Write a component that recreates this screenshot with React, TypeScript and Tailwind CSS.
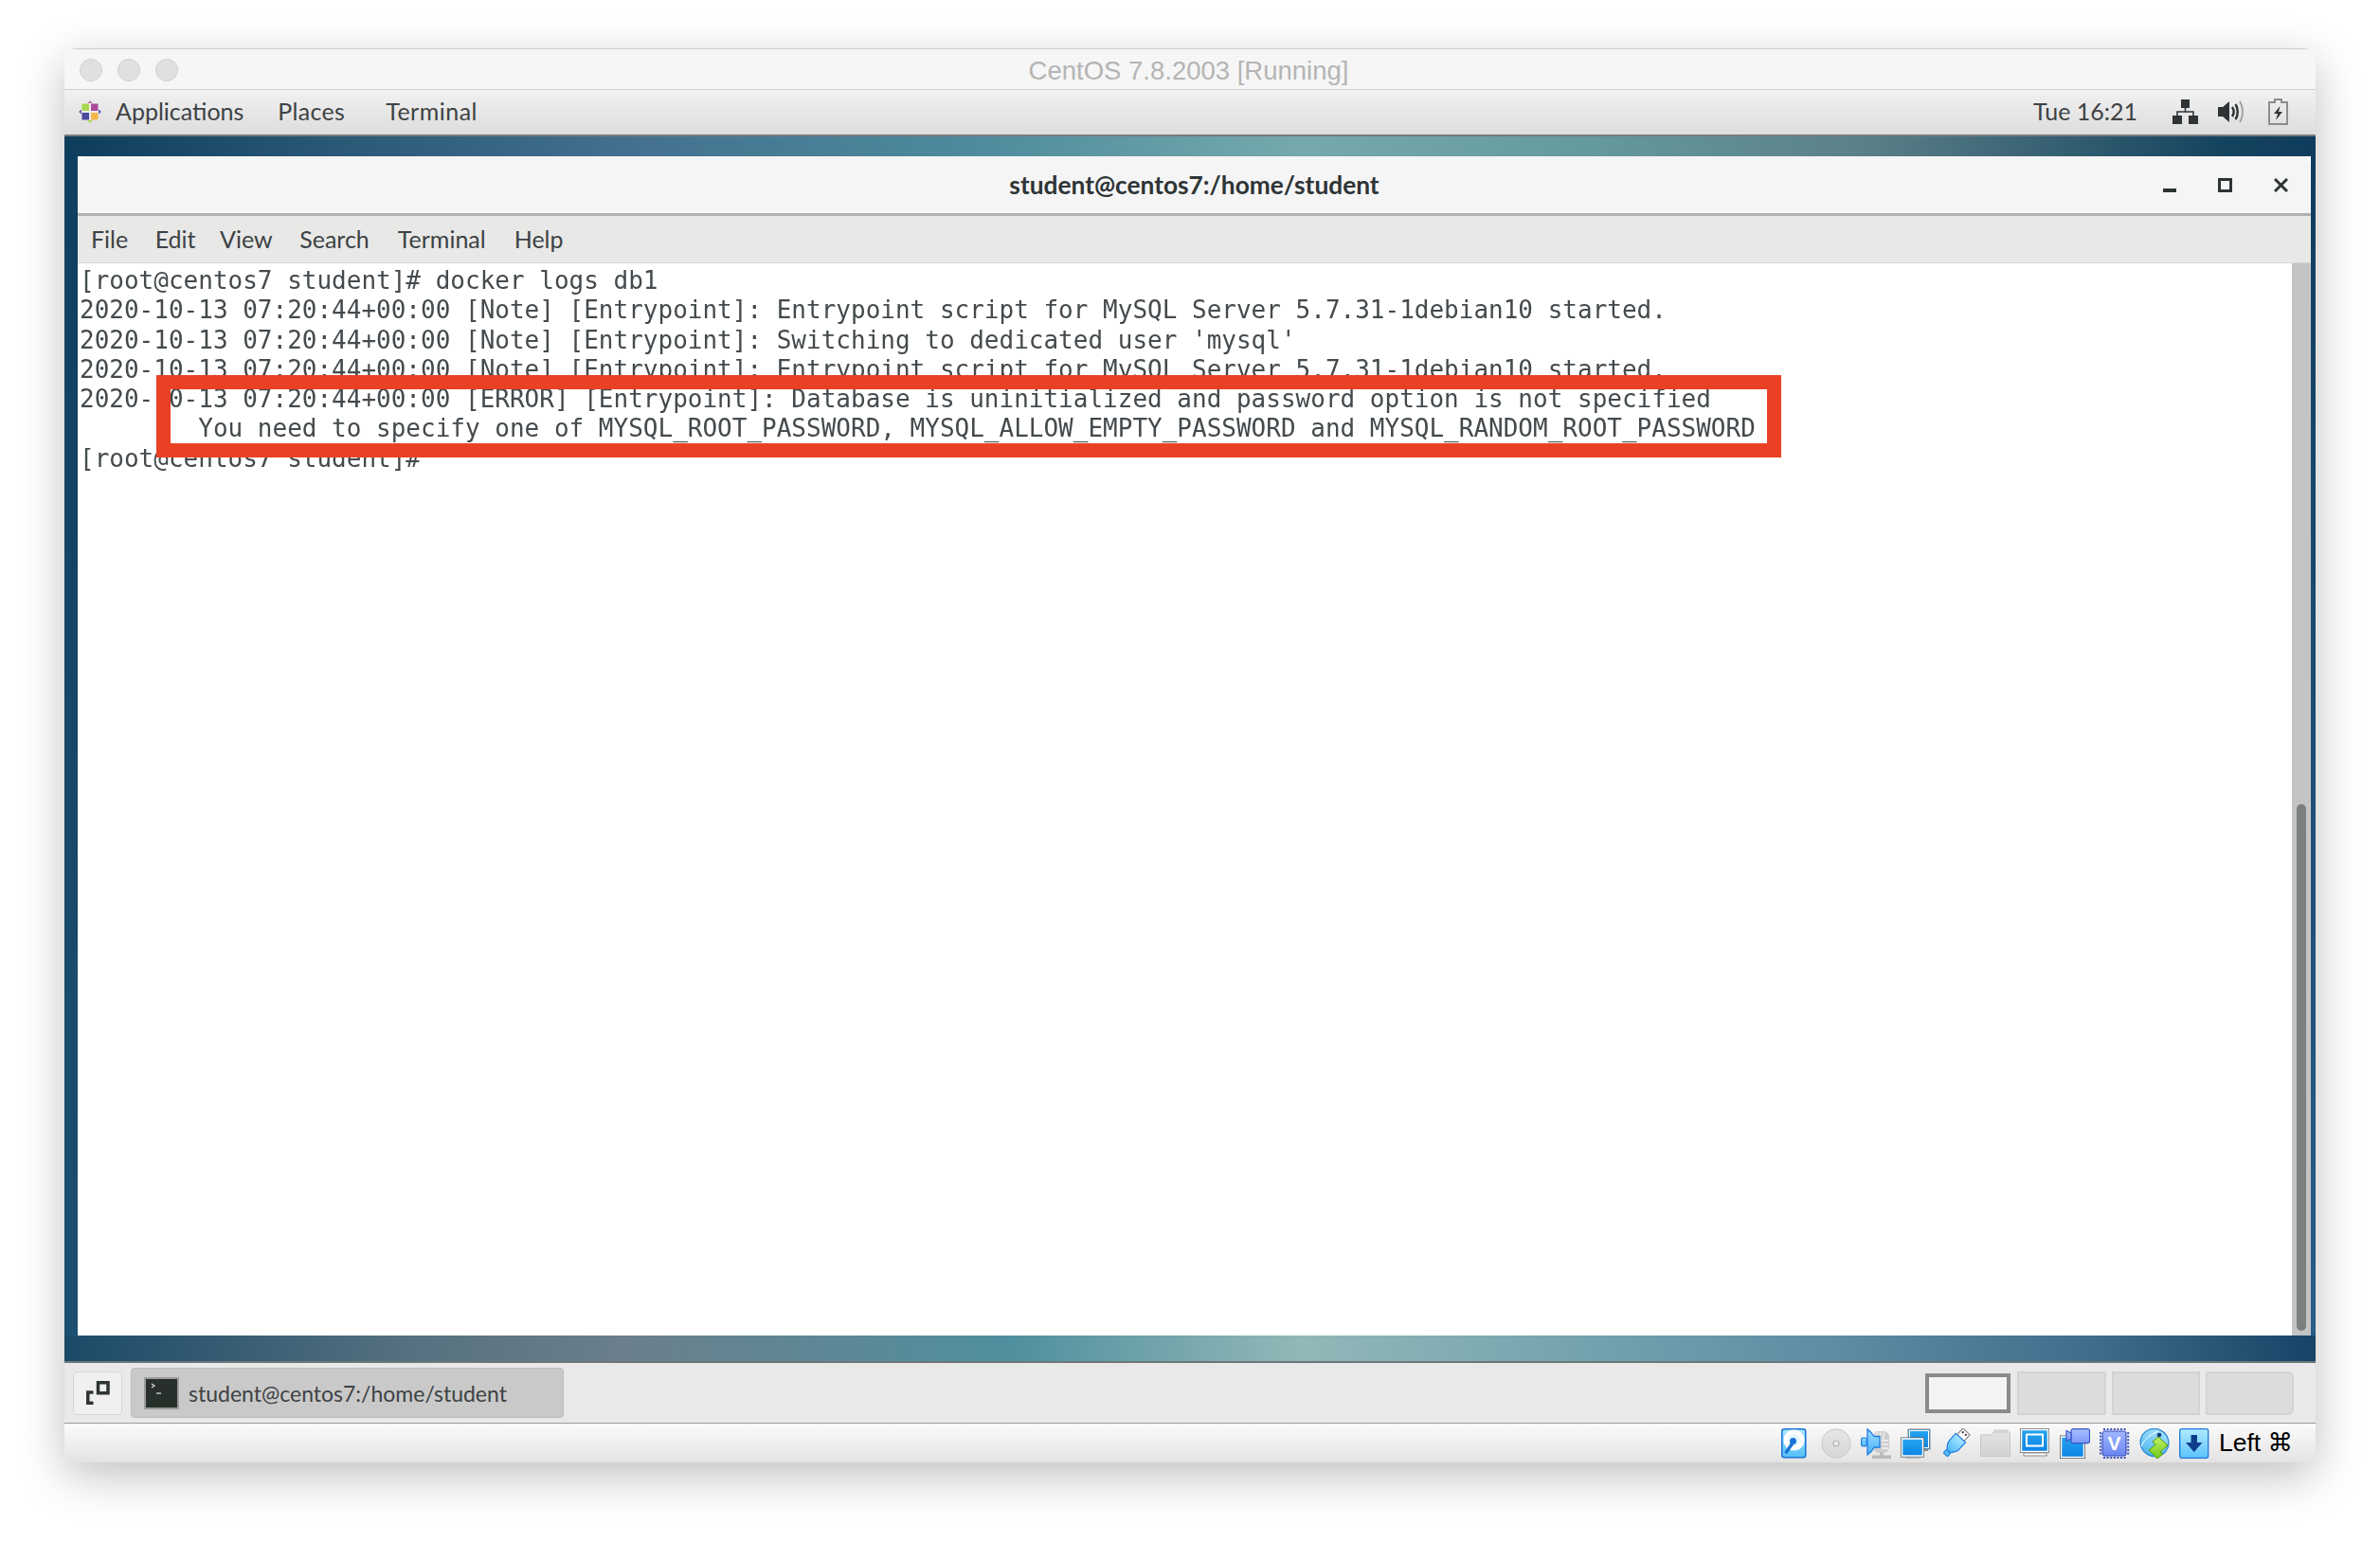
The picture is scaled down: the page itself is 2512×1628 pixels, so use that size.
const lines = [
  "[root@centos7 student]# docker logs db1",
  "2020-10-13 07:20:44+00:00 [Note] [Entrypoint]: Entrypoint script for MySQL Server 5.7.31-1debian10 started.",
  "2020-10-13 07:20:44+00:00 [Note] [Entrypoint]: Switching to dedicated user 'mysql'",
  "2020-10-13 07:20:44+00:00 [Note] [Entrypoint]: Entrypoint script for MySQL Server 5.7.31-1debian10 started.",
  "2020-10-13 07:20:44+00:00 [ERROR] [Entrypoint]: Database is uninitialized and password option is not specified",
  "        You need to specify one of MYSQL_ROOT_PASSWORD, MYSQL_ALLOW_EMPTY_PASSWORD and MYSQL_RANDOM_ROOT_PASSWORD",
  "[root@centos7 student]# ",
];

function CentOSLogo() {
  return (
    <svg width="24" height="24" viewBox="0 0 24 24">
      <rect x="3.500" y="3.500" width="7.500" height="7.500" fill="#a8d64a" />
      <rect x="13" y="3.500" width="7.500" height="7.500" fill="#a8499a" />
      <rect x="3.500" y="13" width="7.500" height="7.500" fill="#4a4aa0" />
      <rect x="13" y="13" width="7.500" height="7.500" fill="#f2b84a" />
      <path d="M12 0l2.5 3h-5z" fill="#c06fb0" />
      <path d="M24 12l-3 2.5v-5z" fill="#5a5ab0" />
      <path d="M12 24l-2.5-3h5z" fill="#a8d64a" />
      <path d="M0 12l3-2.5v5z" fill="#6a5ab0" />
      <path d="M12 3v18M3 12h18" stroke="#f2f2f2" strokeWidth="1.5" />
    </svg>
  );
}

function NetIcon() {
  return (
    <svg width="27" height="26" viewBox="0 0 27 26" fill="#2e3436">
      <rect x="9" y="0" width="9" height="9" />
      <rect x="0" y="17" width="10" height="9" />
      <rect x="17" y="17" width="10" height="9" />
      <path d="M13.5 9v4M5 17v-4h17v4" fill="none" stroke="#2e3436" strokeWidth="1.6" />
    </svg>
  );
}

function SoundIcon() {
  return (
    <svg width="27" height="26" viewBox="0 0 27 26">
      <path d="M0 8h5l7-6v22l-7-6H0z" fill="#2e3436" />
      <path d="M15 8c2 3 2 7 0 10" fill="none" stroke="#2e3436" strokeWidth="2.4" />
      <path d="M18.5 5c3 4.500 3 11.500 0 16" fill="none" stroke="#2e3436" strokeWidth="2.4" />
      <path d="M23 2c4 6.500 4 15.500 0 22" fill="none" stroke="#a0a2a2" strokeWidth="1.8" />
    </svg>
  );
}

function BatteryIcon() {
  return (
    <svg width="21" height="28" viewBox="0 0 21 28">
      <path d="M7 1h7v3h6v23H1V4h6z" fill="none" stroke="#8b8e8e" strokeWidth="2" />
      <path d="M12.500 8L6 16h4l-2 7 7-9h-4z" fill="#2e3436" />
    </svg>
  );
}

function Restore() {
  return (
    <svg width="25" height="25" viewBox="0 0 25 25" fill="none" stroke="#2e3436" strokeWidth="3.500">
      <rect x="12.500" y="1.750" width="10.500" height="11" />
      <path d="M7.500 12H1.750v11.250H7.500" />
    </svg>
  );
}

function TermIcon() {
  return (
    <div className="w-[37px] h-[34px] border-2 border-[#9b9b9b] bg-gradient-to-b from-[#2a2f2c] to-[#253029] shrink-0 flex">
      <svg width="33" height="30" viewBox="0 0 33 30" fill="none" stroke="#d8dcd8" strokeWidth="1.300">
        <path d="M6 5l3 2-3 2" />
        <path d="M11 15h5" />
      </svg>
    </div>
  );
}

const Grad = ({ id, a, b }: { id: string; a: string; b: string }) => (
  <linearGradient id={id} x1="0" y1="0" x2="0" y2="1">
    <stop offset="0" stopColor={a} />
    <stop offset="1" stopColor={b} />
  </linearGradient>
);

function Hd() {
  return (
    <svg width="32" height="32" viewBox="0 0 32 32">
      <defs>
        <Grad id="hd" a="#a5e6ff" b="#55bff8" />
      </defs>
      <rect x="0.750" y="0.750" width="25" height="30" rx="2.500" fill="url(#hd)" stroke="#1b73d6" strokeWidth="1.500" />
      <circle cx="13.500" cy="12.500" r="11" fill="#fff" />
      <circle cx="13.500" cy="12.500" r="6.500" fill="#e4f6ff" />
      <circle cx="12.500" cy="13.500" r="3.500" fill="#1b73d6" />
      <path d="M12 15.500L5.500 25" stroke="#1b73d6" strokeWidth="3.500" strokeLinecap="round" />
    </svg>
  );
}
function Disc() {
  return (
    <svg width="32" height="32" viewBox="0 0 32 32">
      <defs>
        <Grad id="dc" a="#e6e6e6" b="#d6d6d6" />
      </defs>
      <circle cx="16" cy="16" r="15.200" fill="url(#dc)" stroke="#c8c8c8" />
      <circle cx="16" cy="16" r="3" fill="#ececec" stroke="#b4b4b4" strokeWidth="1.200" />
    </svg>
  );
}
function AudioIc() {
  return (
    <svg width="32" height="32" viewBox="0 0 32 32">
      <defs>
        <Grad id="au" a="#9adcff" b="#49b4fb" />
      </defs>
      <rect x="13" y="3" width="17" height="23" rx="6" fill="#cdcdcd" />
      <path d="M17 4v9M20.500 4v9M24 4v9M22 13h7M22 17h7M22 21h7" stroke="#f1f1f1" strokeWidth="1.400" />
      <rect x="20" y="25" width="4" height="4" fill="#bdbdbd" />
      <rect x="12" y="28.500" width="20" height="3.500" fill="#b8b8b8" />
      <path d="M7 .800 C11 4 13 7 14 8.500 H20 V20 H14 C13 22 11 25.500 7 28 Z" fill="url(#au)" stroke="#1e7ce0" strokeWidth="1.300" />
      <rect x=".600" y="10" width="5.500" height="9" rx="1.500" fill="url(#au)" stroke="#1e7ce0" strokeWidth="1.200" />
    </svg>
  );
}
function NetAd() {
  return (
    <svg width="32" height="32" viewBox="0 0 32 32">
      <defs>
        <Grad id="na" a="#27a6ef" b="#0a82e6" />
      </defs>
      <rect x="8" y="1" width="23" height="21" fill="url(#na)" stroke="#8a8a8a" />
      <rect x="9.500" y="2.500" width="20" height="18" fill="none" stroke="#fff" strokeWidth="1" />
      <rect x="24" y="22" width="5" height="2" fill="#8a8a8a" />
      <rect x="0.500" y="10" width="24" height="20" fill="url(#na)" stroke="#555" strokeWidth="1" />
      <rect x="1.500" y="11" width="22" height="18" fill="none" stroke="#fff" strokeWidth="1.500" />
      <rect x="5" y="30" width="16" height="1.500" fill="#9a9a9a" />
    </svg>
  );
}
function Usb() {
  return (
    <svg width="32" height="32" viewBox="0 0 32 32">
      <defs>
        <Grad id="us" a="#a8e6ff" b="#4eb8fa" />
      </defs>
      <g transform="rotate(42 16 16) translate(0 1)">
        <rect x="11" y="-2" width="10" height="9" fill="#fff" stroke="#777" />
        <rect x="12.800" y="0" width="2" height="2" fill="#333" />
        <rect x="17" y="0" width="2" height="2" fill="#333" />
        <path d="M9 7h14v10c0 4-3 7-5 9h-4c-2-2-5-5-5-9z" fill="url(#us)" stroke="#1e7ce0" strokeWidth="1.200" />
        <rect x="13" y="26" width="6" height="5" rx="1" fill="#55baf8" stroke="#1e7ce0" />
      </g>
    </svg>
  );
}
function Folder() {
  return (
    <svg width="32" height="32" viewBox="0 0 32 32">
      <defs>
        <Grad id="fo" a="#e4e4e4" b="#d2d2d2" />
      </defs>
      <path d="M.500 7L12 7l3-5h13l3.500 3v24.500H.500z" fill="url(#fo)" stroke="#c6c6c6" />
      <path d="M15 2h13l3.500 3H14z" fill="#d4d4d4" />
    </svg>
  );
}
function Display() {
  return (
    <svg width="32" height="32" viewBox="0 0 32 32">
      <defs>
        <Grad id="di" a="#27a6ef" b="#0a82e6" />
      </defs>
      <rect x="4" y="26" width="24" height="3" fill="#fff" stroke="#8a8a8a" />
      <rect x=".500" y=".500" width="30" height="25" fill="url(#di)" stroke="#6e6e6e" />
      <rect x="1.500" y="1.500" width="28" height="23" fill="none" stroke="#fff" strokeWidth="1.500" />
      <rect x="7" y="6.500" width="17" height="12" fill="none" stroke="#fff" strokeWidth="2" />
    </svg>
  );
}
function Capture() {
  return (
    <svg width="32" height="32" viewBox="0 0 32 32">
      <defs>
        <Grad id="ca" a="#27a6ef" b="#0a82e6" />
        <Grad id="cb" a="#a8c0ff" b="#7e98f6" />
      </defs>
      <rect x=".500" y="8" width="26" height="23.500" fill="url(#ca)" stroke="#555" />
      <rect x="1.500" y="9" width="24" height="21.500" fill="none" stroke="#fff" strokeWidth="1.500" />
      <rect x="12" y=".700" width="19.500" height="15" rx="2" fill="url(#cb)" stroke="#3b55c8" strokeWidth="1.200" />
      <path d="M12 5l-5-2.500v11L12 11z" fill="url(#cb)" stroke="#3b55c8" strokeWidth="1.200" />
    </svg>
  );
}
function VChip() {
  return (
    <svg width="32" height="32" viewBox="0 0 32 32">
      <defs>
        <Grad id="vc" a="#a0b6ff" b="#6a86f0" />
      </defs>
      <path d="M4 1h24M4 31h24M.800 4v24M30.200 4v24" stroke="#3a4fbe" strokeWidth="2" strokeDasharray="2 1.600" fill="none" />
      <rect x="3" y="3" width="25" height="26" rx="3" fill="url(#vc)" stroke="#3a4fbe" strokeWidth="1.200" />
      <text x="15.500" y="23" textAnchor="middle" fontFamily="Liberation Sans, sans-serif" fontWeight="700" fontSize="21" fill="#fff">V</text>
    </svg>
  );
}
function GlobeIc() {
  return (
    <svg width="32" height="32" viewBox="0 0 32 32">
      <defs>
        <Grad id="gl" a="#a0e0fc" b="#53b8ef" />
        <Grad id="gg" a="#c4f060" b="#6ec81e" />
      </defs>
      <ellipse cx="16" cy="15" rx="15" ry="14.500" transform="rotate(25 16 15)" fill="url(#gl)" stroke="#2a86d0" strokeWidth="1.200" />
      <path d="M2 19C6 10 13 6 20 3" stroke="#fff" strokeWidth="1" fill="none" />
      <circle cx="21" cy="7" r="2.300" fill="#123a70" />
      <path d="M20 9l10 9-8 7 3 2-6 5-9-9 7-6-3-3z" fill="url(#gg)" stroke="#4d9a12" strokeWidth="1" />
    </svg>
  );
}
function DownIc() {
  return (
    <svg width="32" height="32" viewBox="0 0 32 32">
      <defs>
        <Grad id="dn" a="#b0eaff" b="#5cc2fb" />
      </defs>
      <rect x=".700" y=".700" width="30" height="30.600" rx="2" fill="url(#dn)" stroke="#1f78d8" strokeWidth="1.300" />
      <path d="M12.500 7h6.500v8h5.500L15.700 25 7 15h5.500z" fill="#0f3d8c" />
    </svg>
  );
}

const topText = "font-['Lato','Noto_Sans',sans-serif] text-[25px] text-[#3d4244]";

export default function App() {
  return (
    <div className="w-[2512px] h-[1628px] bg-white pt-[51px] pl-[68px]">
      <div className="w-[2376px] h-[1493px] rounded-[12px] overflow-hidden flex flex-col shadow-[0_14px_48px_rgba(0,0,0,0.25)]">
        {/* Host title bar */}
        <div className="h-[44px] shrink-0 grid grid-cols-3 items-center bg-[#f6f6f6] border-t border-[#cfcfcf] border-b border-b-[#d2d2d2]">
          <div className="flex gap-[16px] pl-[16px]">
            <div className="w-[24px] h-[24px] rounded-full bg-[#e0e0e0] border border-[#d0d0d0]" />
            <div className="w-[24px] h-[24px] rounded-full bg-[#e0e0e0] border border-[#d0d0d0]" />
            <div className="w-[24px] h-[24px] rounded-full bg-[#e0e0e0] border border-[#d0d0d0]" />
          </div>
          <div className="pt-[2px] -ml-[3px] text-center whitespace-nowrap font-['Liberation_Sans',sans-serif] text-[27.500px] text-[#b4b4b4]">
            CentOS 7.8.2003 [Running]
          </div>
          <div />
        </div>
        {/* GNOME top bar */}
        <div className="h-[49px] shrink-0 flex items-center pb-[2px] bg-gradient-to-b from-[#f1f1f1] to-[#dddddd] border-b-2 border-[#777b7c]">
          <div className="ml-[15px] flex"><CentOSLogo /></div>
          <span className={`ml-[15px] ${topText}`}>Applications</span>
          <span className={`ml-[36px] tracking-[0.3px] ${topText}`}>Places</span>
          <span className={`ml-[43px] tracking-[0.5px] ${topText}`}>Terminal</span>
          <span className={`ml-auto ${topText}`}>Tue 16:21</span>
          <div className="ml-[37px] flex"><NetIcon /></div>
          <div className="ml-[21px] flex"><SoundIcon /></div>
          <div className="ml-[26px] mr-[29px] flex"><BatteryIcon /></div>
        </div>
        {/* Desktop */}
        <div className="flex-1 min-h-0 flex flex-col">
          <div className="h-[21px] shrink-0 bg-[linear-gradient(90deg,#0e3d5c_0%,#2a5877_12%,#43708f_25%,#4d8a9c_40%,#75a9ad_55%,#64999d_68%,#5b7f88_80%,#14435f_96%,#0f3c5c_100%)]" />
          <div className="flex-1 min-h-0 flex">
            <div className="w-[14px] shrink-0 bg-gradient-to-b from-[#0f3f5e] to-[#1d5070]" />
            {/* Terminal window */}
            <div className="flex-1 min-w-0 flex flex-col rounded-t-[12px] overflow-hidden">
              <div className="h-[63px] shrink-0 grid grid-cols-[1fr_auto_1fr] items-center bg-[#f5f5f5] border-b-[3px] border-[#b2b2b0]">
                <div />
                <div className="pt-[2px] whitespace-nowrap font-['Lato','Noto_Sans',sans-serif] font-bold text-[26.300px] text-[#2e3436]">
                  student@centos7:/home/student
                </div>
                <div className="flex justify-end items-start pr-[24px] gap-[44px]">
                  <svg width="14" height="14" viewBox="0 0 14 14" className="mt-px"><rect x="0" y="10" width="14" height="4" fill="#2e3436" /></svg>
                  <svg width="15" height="15" viewBox="0 0 15 15" fill="none" stroke="#2e3436" strokeWidth="3"><rect x="1.500" y="1.500" width="12" height="12" /></svg>
                  <svg width="15" height="15" viewBox="0 0 15 15" fill="none" stroke="#2e3436" strokeWidth="3"><path d="M1 1l13 13M14 1L1 14" /></svg>
                </div>
              </div>
              <div className={`h-[50px] shrink-0 flex items-center pt-[1px] gap-[28.500px] pl-[14px] bg-[#e8e8e7] border-b border-[#d6d6d6] ${topText}`}>
                <span>File</span>
                <span>Edit</span>
                <span className="-ml-[3px]">View</span>
                <span>Search</span>
                <span className="ml-[1.500px]">Terminal</span>
                <span className="ml-[1.500px]">Help</span>
              </div>
              <div className="flex-1 min-h-0 flex relative bg-white">
                <div className="flex-1 min-w-0 pl-[2px] pt-[3px] font-['DejaVu_Sans_Mono',monospace] text-[26px] leading-[31.3px] text-[#444a4d] blur-[0.4px]">
                  {lines.map((l, i) => (
                    <div key={i} className="h-[31.3px] whitespace-pre">{l}</div>
                  ))}
                </div>
                <div className="w-[20px] shrink-0 flex flex-col bg-[#c4c4c4] px-[5px] pt-[571px] pb-[5px]">
                  <div className="flex-1 min-h-0 w-[10px] rounded-full bg-[#7b7f7f]" />
                </div>
                <div className="absolute left-[83px] top-[118px] w-[1715px] h-[87px] border-[15px] border-[#ea4124]" />
              </div>
            </div>
            <div className="w-[5px] shrink-0 bg-gradient-to-b from-[#0f3d60] to-[#2a5c88]" />
          </div>
          <div className="h-[29px] shrink-0 border-b-2 border-[#6c7678] bg-[linear-gradient(90deg,#1a4a68_0%,#55707f_15%,#6b7f8c_25%,#508f9e_42%,#92b8b8_55%,#72a2ae_68%,#5f8ea5_78%,#3f6d8c_90%,#164466_100%)]" />
        </div>
        {/* VirtualBox mini bar */}
        <div className="h-[64px] shrink-0 flex items-center pl-[9px] pr-[23px] bg-[#e9e9e9] border-b border-[#9a9a9a]">
          <div className="w-[52px] h-[46px] rounded-[4px] bg-[#f0f0f0] border border-[#d6d6d6] flex items-center justify-center">
            <Restore />
          </div>
          <div className="ml-[9px] w-[457px] h-[53px] rounded-[4px] bg-[#c9c9c9] border border-[#bcbcbc] flex items-center pl-[13px] gap-[10px]">
            <TermIcon />
            <span className="pt-[2px] font-['Lato','Noto_Sans',sans-serif] text-[23px] text-[#3d4244] whitespace-nowrap">student@centos7:/home/student</span>
          </div>
          <div className="ml-auto flex items-center">
            <div className="w-[90px] h-[42px] bg-[#f5f4f2] border-[4px] border-[#8a8a8a]" />
            <div className="ml-[7px] w-[94px] h-[46px] bg-[#dcdcdc] border-2 border-[#d3d3d3]" />
            <div className="ml-[6px] w-[93px] h-[46px] bg-[#dcdcdc] border-2 border-[#d3d3d3]" />
            <div className="ml-[6px] w-[93px] h-[46px] bg-[#dcdcdc] border-2 border-[#d3d3d3] rounded-r-[6px]" />
          </div>
        </div>
        {/* Status bar */}
        <div className="h-[41px] shrink-0 flex items-center justify-end gap-[10px] pt-[1px] pr-[24px] bg-gradient-to-b from-[#fbfbfb] to-[#e3e3e3]">
          <Hd />
          <Disc />
          <AudioIc />
          <NetAd />
          <Usb />
          <Folder />
          <Display />
          <Capture />
          <VChip />
          <GlobeIc />
          <DownIc />
          <span className="font-['Liberation_Sans','DejaVu_Sans',sans-serif] text-[26.500px] text-black whitespace-nowrap">Left ⌘</span>
        </div>
      </div>
    </div>
  );
}
